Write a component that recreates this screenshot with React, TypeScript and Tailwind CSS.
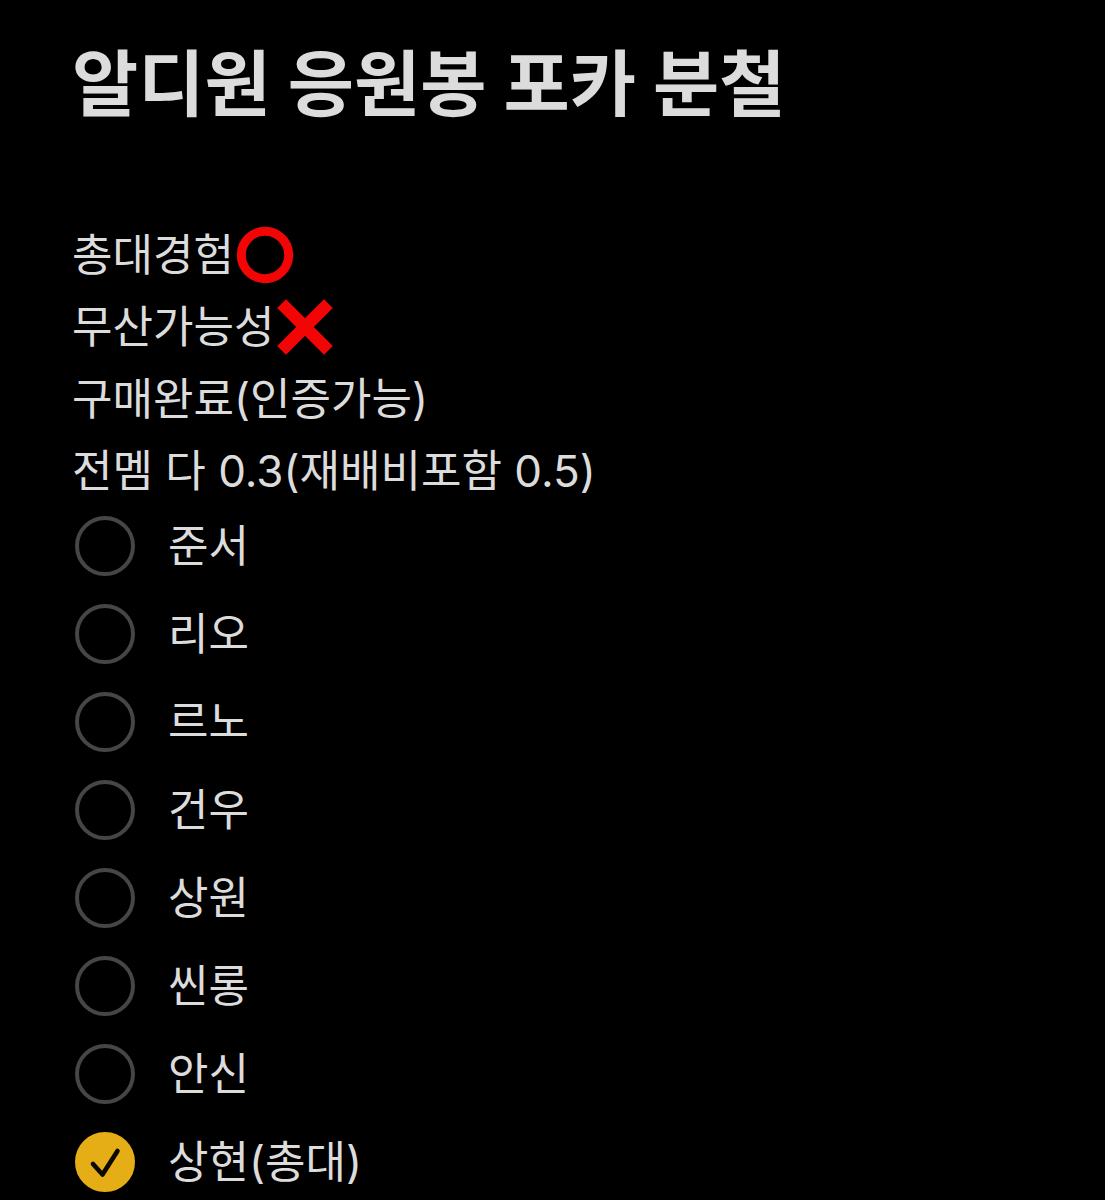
import { useState } from 'react';

const MEMBERS = [
  { id: 'junseo', label: '준서', done: false },
  { id: 'rio', label: '리오', done: false },
  { id: 'reno', label: '르노', done: false },
  { id: 'geonwoo', label: '건우', done: false },
  { id: 'sangwon', label: '상원', done: false },
  { id: 'xinlong', label: '씬롱', done: false },
  { id: 'anxin', label: '안신', done: false },
  { id: 'sanghyeon', label: '상현(총대)', done: true },
];

function CircleMark() {
  return (
    <svg viewBox="0 0 58 58" className="ml-0.5 size-[58px]" role="img" aria-label="O">
      <circle cx="29" cy="29" r="23.7" fill="none" stroke="#f30505" strokeWidth="9" />
    </svg>
  );
}

function CrossMark() {
  return (
    <svg viewBox="0 0 58 58" className="ml-0.5 size-[58px]" role="img" aria-label="X">
      <path d="M5.6 5.6 52.4 52.4M52.4 5.6 5.6 52.4" fill="none" stroke="#f30505" strokeWidth="12.5" />
    </svg>
  );
}

export default function App() {
  const [items, setItems] = useState(MEMBERS);

  const toggle = (id: string) =>
    setItems(items.map((item) => (item.id === id ? { ...item, done: !item.done } : item)));

  return (
    <main className="min-h-screen bg-black px-[72px] pt-9 text-[44px] text-[#dcdcdc] font-['Inter','Noto_Sans_CJK_KR',sans-serif]">
      <h1 className="text-[72px] leading-24 font-bold">알디원 응원봉 포카 분철</h1>

      <div className="mt-[87px] leading-[72px]">
        <p className="flex items-center">총대경험<CircleMark /></p>
        <p className="flex items-center">무산가능성<CrossMark /></p>
        <p>구매완료(인증가능)</p>
        <p>전멤 다 0.3(재배비포함 0.5)</p>
      </div>

      {/* Checklist */}
      <ul className="-mt-[5px]">
        {items.map((item) => (
          <li key={item.id}>
            <label htmlFor={item.id} className="flex h-[88px] items-center gap-[33px] pl-[3px]">
              <span className="grid size-[60px] shrink-0">
                <input
                  id={item.id}
                  type="checkbox"
                  checked={item.done}
                  onChange={() => toggle(item.id)}
                  className="peer col-start-1 row-start-1 size-[60px] appearance-none rounded-full border-4 border-[#464646] checked:border-[#e5ae16] checked:bg-[#e5ae16]"
                />
                <svg viewBox="0 0 60 60" className="pointer-events-none col-start-1 row-start-1 hidden size-[60px] peer-checked:block">
                  <path d="M18 32 27.5 42.5 42.5 19" fill="none" stroke="#0a0800" strokeWidth="4.6" strokeLinecap="round" strokeLinejoin="round" />
                </svg>
              </span>
              {item.label}
            </label>
          </li>
        ))}
      </ul>
    </main>
  );
}
